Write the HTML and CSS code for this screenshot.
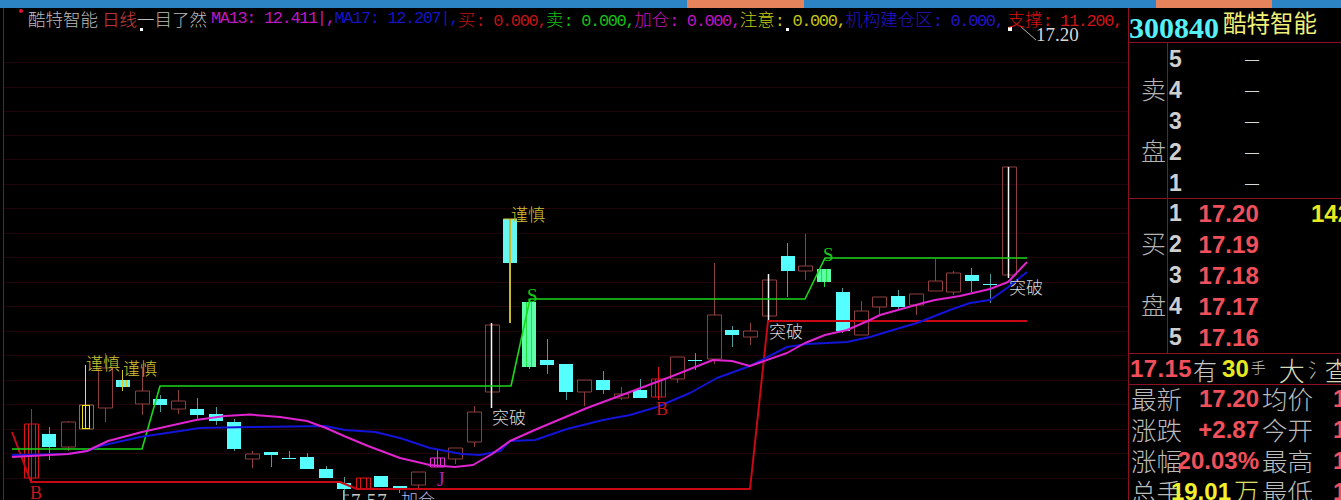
FILE: index.html
```html
<!DOCTYPE html>
<html lang="zh-CN">
<head>
<meta charset="utf-8">
<title>酷特智能 日线</title>
<link rel="stylesheet" href="styles.css">
</head>
<body>
<div class="app">
  <div class="topbar"><i class="seg"></i><i class="seg hot"></i><i class="seg"></i><i class="seg hot"></i><i class="seg"></i></div>
  <div class="main">
    <section class="chart">
      <svg class="plot" viewBox="0 8 1128 492" width="1128" height="492" xmlns="http://www.w3.org/2000/svg">
        <path class="grid" d="M4 62.5H1128M4 87.5H1128M4 111.5H1128M4 135.5H1128M4 159.5H1128M4 184.5H1128M4 208.5H1128M4 233.5H1128M4 257.5H1128M4 282.5H1128M4 306.5H1128M4 331.5H1128M4 355.5H1128M4 380.5H1128M4 404.5H1128M4 429.5H1128M4 453.5H1128M4 478.5H1128"/>
        <path class="axis" d="M3.5 8V500"/>
        <circle class="redDot" cx="21" cy="11" r="2"/>
        <g class="dots"><rect x="140" y="28" width="3" height="3"/><rect x="786" y="28" width="3" height="3"/><rect x="1008" y="27" width="4" height="4"/></g>
        <path class="leader" d="M1020 26L1036 40"/>

        <g class="hollow">
          <path d="M68.5 421V422M68.5 447V451M61.5 422h14v25h-14z"/>
          <path d="M105.5 353V368M105.5 408V422M98.5 368h14v40h-14z"/>
          <path d="M142.5 367V391M142.5 404V415M135.5 391h14v13h-14z"/>
          <path d="M178.5 390V401M178.5 409V414M171.5 401h14v8h-14z"/>
          <path d="M252.5 451V454M252.5 459V468M245.5 454h14v5h-14z"/>
          <path d="M418.5 485V488M411.5 472h14v13h-14z"/>
          <path d="M455.5 459V464M448.5 448h14v11h-14z"/>
          <path d="M474.5 406V412M474.5 442V447M467.5 412h14v30h-14z"/>
          <path d="M485.5 325h14v67h-14z"/>
          <path d="M584.5 392V406M577.5 380h14v12h-14z"/>
          <path d="M621.5 387V394M621.5 398V400M614.5 394h14v4h-14z"/>
          <path d="M677.5 379V383M670.5 357h14v22h-14z"/>
          <path d="M714.5 263V315M714.5 359V364M707.5 315h14v44h-14z"/>
          <path d="M750.5 323V331M750.5 337V345M743.5 331h14v6h-14z"/>
          <path d="M762.5 280h14v36h-14z"/>
          <path d="M805.5 234V266M805.5 271V280M798.5 266h14v5h-14z"/>
          <path d="M861.5 301V311M854.5 311h14v24h-14z"/>
          <path d="M879.5 307V315M872.5 297h14v10h-14z"/>
          <path d="M916.5 305V315M909.5 294h14v11h-14z"/>
          <path d="M935.5 259V281M928.5 281h14v10h-14z"/>
          <path d="M953.5 271V273M953.5 292V295M946.5 273h14v19h-14z"/>
          <path d="M1002.5 167h14v108h-14z"/>
        </g>

        <g class="wicks">
          <path d="M49.5 427V460M160.5 395V412M197.5 398V419M216.5 407V425M234.5 419V451M271.5 452V467M307.5 453V469M326.5 466V478M344.5 477V500M399.5 486V493M547.5 339V374M566.5 364V400M603.5 371V394M640.5 379V398M732.5 326V347M787.5 243V297M842.5 288V333M898.5 290V310M971.5 268V292M289.5 451V459M695.5 353V370M990.5 274V303"/>
        </g>
        <g class="cyan">
          <rect x="42" y="434" width="14" height="13"/><rect x="153" y="399" width="14" height="6"/><rect x="190" y="409" width="14" height="6"/><rect x="209" y="414" width="14" height="7"/><rect x="227" y="422" width="14" height="27"/><rect x="264" y="452" width="14" height="3"/><rect x="300" y="457" width="14" height="12"/><rect x="319" y="469" width="14" height="9"/><rect x="337" y="483" width="14" height="6"/><rect x="374" y="476" width="14" height="11"/><rect x="393" y="486" width="14" height="2"/><rect x="540" y="360" width="14" height="5"/><rect x="559" y="364" width="14" height="28"/><rect x="596" y="380" width="14" height="10"/><rect x="633" y="390" width="14" height="8"/><rect x="725" y="330" width="14" height="5"/><rect x="781" y="256" width="14" height="15"/><rect x="836" y="292" width="14" height="39"/><rect x="891" y="296" width="14" height="11"/><rect x="965" y="275" width="14" height="6"/>
          <rect x="282" y="458" width="14" height="1"/><rect x="688" y="360" width="14" height="1"/><rect x="983" y="284" width="14" height="1"/>
        </g>

        <g class="markRed">
          <path d="M31.5 409V481M24.5 424h14v54h-14zM28.5 424V478M35.5 424V478"/>
          <path d="M356.5 478h14v11h-14zM360.5 478V489M366.5 478V489"/>
          <path d="M658.5 367V400M651.5 379h14v18h-14zM655.5 379V397M661.5 379V397"/>
        </g>
        <g class="markYellow">
          <path class="dimBox" d="M79.5 405h14v24h-14z"/>
          <path d="M85.5 365V429M82.5 405V429M89.5 405V429M82 405.500H90M82 428.500H90"/>
        </g>
        <g class="striped">
          <rect class="skyFill" x="116" y="380" width="14" height="7"/>
          <path class="yellowLine" d="M122.500 370V391M119.500 380V387M126.500 380V387"/>
          <rect class="skyFill" x="503" y="219" width="14" height="44"/>
          <path class="yellowLine" d="M503.500 219H517"/>
          <path class="yellowWick" d="M510 219V323"/>
          <path class="mintLine" d="M507.500 219V263M513.500 219V263"/>
          <rect class="mintFill" x="522" y="302" width="14" height="65"/>
          <path class="greenLine" d="M526.500 302V367M531.500 302V367M529.500 367V369"/>
          <rect class="mintFill" x="817" y="269" width="14" height="13"/>
          <path class="greenLine" d="M821.500 269V282M826.500 269V282M824.500 282V287"/>
        </g>
        <g class="markMagenta">
          <path d="M437.500 449V467M430.500 458h14v9h-14zM434.500 458V467M440.500 458V467"/>
        </g>
        <g class="whiteWicks"><path d="M491.500 323V408M768.500 274V321M1008.500 167V278"/></g>

        <path class="line redLine" d="M12 432L31 482H340L357 489H750L768 321H1027"/>
        <path class="line greenTrend" d="M12 449H142L160 386H511L530 299H805L825 258H1027"/>
        <path class="line blueLine" d="M12 455L68 454 87 451 100 446 140 437 200 428 250 427 325 426 345 430 375 432 400 438 430 448 462 454 480 455 500 451 510 441 535 440 567 429 603 420 630 415 657 407 690 393 717 378 750 366 787 347 807 344 847 342 870 337 893 330 917 323 950 310 970 303 990 300 1007 288 1027 272"/>
        <path class="line magentaLine" d="M12 457L68 454 87 451 108 441 142 432 160 428 196 420 225 416 250 414.600 280 417 307 421 326 428 344 436 368 446 400 458 430 465 455 467 473 465 492 454 510 441 537 429 587 408 630 392 670 377 713 360 732 361 750 366 787 353 805 343 825 335 847 330 870 320 880 315 923 303 935 300 960 296 990 289 1008 282 1027 262"/>

        <g class="lblWarn"><text x="86" y="370">谨慎</text><text x="123" y="375">谨慎</text><text x="511" y="221">谨慎</text></g>
        <g class="lblBreak"><text x="492" y="424">突破</text><text x="769" y="338">突破</text><text x="1009" y="294">突破</text></g>
        <g class="lblS"><text x="527" y="302">S</text><text x="823" y="261">S</text></g>
        <g class="lblB"><text x="30" y="499">B</text><text x="656" y="415">B</text></g>
        <text class="lblJ" x="437" y="486">J</text>
        <path class="leader" d="M343.500 490V500M343.500 495H349"/>
        <text class="lblLow" x="351" y="507">7.57</text>
        <text class="lblAdd" x="401" y="506">加仓</text>
        <text class="lblHigh" x="1036" y="41">17.20</text>
      </svg>
      <div class="legend">
        <span class="cn name">酷特智能</span><span class="cn period">日线</span><span class="cn tool">一目了然</span>
        <span class="item c-ma13">MA13: 12.411|,</span><span class="item c-ma17">MA17: 12.207|,</span><span class="item c-red"><span class="cn">买</span>: 0.000,</span><span class="item c-green"><span class="cn">卖</span>: 0.000,</span><span class="item c-mag"><span class="cn">加仓</span>: 0.000,</span><span class="item c-yel"><span class="cn">注意</span>: 0.000,</span><span class="item c-blue"><span class="cn">机构建仓区</span>: 0.000,</span><span class="item c-red2"><span class="cn">支撑</span>: 11.200,</span><span class="item c-red2"><span class="cn">压</span></span>
      </div>
    </section>

    <aside class="panel">
      <header class="head"><span class="code">300840</span><span class="stock">酷特智能</span></header>
      <div class="book sell">
        <div class="side"><span class="s2">卖</span><span class="s4">盘</span></div>
        <div class="rows">
          <div class="row"><span class="n">5</span><span class="p dash">—</span></div>
          <div class="row"><span class="n">4</span><span class="p dash">—</span></div>
          <div class="row"><span class="n">3</span><span class="p dash">—</span></div>
          <div class="row"><span class="n">2</span><span class="p dash">—</span></div>
          <div class="row"><span class="n">1</span><span class="p dash">—</span></div>
        </div>
      </div>
      <div class="book buy">
        <div class="side"><span class="s2">买</span><span class="s4">盘</span></div>
        <div class="rows">
          <div class="row"><span class="n">1</span><span class="p">17.20</span><span class="v">142</span></div>
          <div class="row"><span class="n">2</span><span class="p">17.19</span></div>
          <div class="row"><span class="n">3</span><span class="p">17.18</span></div>
          <div class="row"><span class="n">4</span><span class="p">17.17</span></div>
          <div class="row"><span class="n">5</span><span class="p">17.16</span></div>
        </div>
      </div>
      <div class="quote">
        <span class="qp">17.15</span><span class="qt">有</span><span class="qv">30</span><span class="qu">手</span><span class="qb">大</span><span class="qc">氵</span><span class="qd">查</span>
      </div>
      <div class="stats">
        <div class="st"><span class="l">最新</span><span class="val"><b>17.20</b></span><span class="l2">均价</span><b class="r">1</b></div>
        <div class="st"><span class="l">涨跌</span><span class="val"><b>+2.87</b></span><span class="l2">今开</span><b class="r">1</b></div>
        <div class="st"><span class="l">涨幅</span><span class="val"><b>20.03%</b></span><span class="l2">最高</span><b class="r">1</b></div>
        <div class="st"><span class="l">总手</span><span class="val"><b class="y">19.01</b><span class="wan">万</span></span><span class="l2">最低</span><b class="r">1</b></div>
      </div>
    </aside>
  </div>
</div>
</body>
</html>
```

FILE: styles.css
```css
* { box-sizing: border-box; }
html, body { margin: 0; padding: 0; background: #000; }
body { width: 1341px; height: 500px; overflow: hidden; font-family: "Noto Sans CJK SC", sans-serif; }
.app { width: 1341px; height: 500px; display: flex; flex-direction: column; overflow: hidden; }

.topbar { height: 8px; flex: none; display: grid; grid-template-columns: 687px 117px 352px 116px 1fr; }
.seg { background: #2c84c4; }
.seg.hot { background: #e4835c; }

.main { flex: 1; display: flex; min-height: 0; }
.chart { position: relative; width: 1128px; flex: none; overflow: hidden; }
.plot { display: block; }

.grid { stroke: #1f040a; stroke-width: 1; fill: none; }
.axis { stroke: #8c1020; stroke-width: 1; }
.redDot { fill: #e01030; }
.dots rect { fill: #fff; }
.leader { stroke: #b0b0b0; stroke-width: 1; fill: none; }

.hollow path { fill: none; stroke: #8e3f3f; stroke-width: 1; }
.wicks path { fill: none; stroke: #4f9a9a; stroke-width: 1; }
.cyan rect { fill: #55ffff; }
.markRed path { fill: none; stroke: #e01414; stroke-width: 1; }
.markYellow path { fill: none; stroke: #f0e020; stroke-width: 1; }
.markYellow .dimBox { stroke: #92703a; }
.skyFill { fill: #66f8f0; }
.mintFill { fill: #5cffa8; }
.yellowLine { fill: none; stroke: #d8c828; stroke-width: 1; }
.yellowWick { fill: none; stroke: #c8b830; stroke-width: 2; }
.mintLine { fill: none; stroke: #a8f060; stroke-width: 1; }
.greenLine { fill: none; stroke: #20e040; stroke-width: 1; }
.markMagenta path { fill: none; stroke: #f030e0; stroke-width: 1; }
.whiteWicks path { fill: none; stroke: #f4f4f4; stroke-width: 1.5; }

.line { fill: none; stroke-linejoin: round; }
.redLine { stroke: #c80814; stroke-width: 2; }
.greenTrend { stroke: #18d818; stroke-width: 1.6; }
.blueLine { stroke: #1414d8; stroke-width: 2; }
.magentaLine { stroke: #e024d0; stroke-width: 2; }

.plot text { font-family: "Noto Sans CJK SC", sans-serif; font-size: 17px; font-weight: 300; }
.lblWarn text { fill: #d0c030; }
.lblBreak text { fill: #d8d8d8; }
.plot .lblS text { font-family: "Liberation Serif", serif; fill: #18c818; font-size: 19px; }
.plot .lblB text { font-family: "Liberation Serif", serif; fill: #c81818; font-size: 18px; }
.plot .lblJ { font-family: "Liberation Serif", serif; fill: #b020b0; font-size: 20px; }
.plot .lblLow { font-family: "Liberation Serif", serif; fill: #c8c8c8; font-size: 19px; letter-spacing: 0.800px; }
.plot .lblAdd { fill: #b8b8e8; }
.plot .lblHigh { font-family: "Liberation Serif", serif; fill: #d8d8d8; font-size: 19px; }

.legend { position: absolute; left: 0; top: 0; width: 1127px; height: 20px; padding-left: 28px; overflow: hidden; white-space: nowrap; font-size: 0; display: flex; align-items: center; }
.cn { font-family: "Noto Sans CJK SC", sans-serif; font-size: 17.500px; letter-spacing: 0; font-weight: 300; }
.name, .tool { color: #bcbcbc; }
.name { margin-right: 4px; }
.period { color: #d84040; }
.tool { margin-right: 4px; }
.item { font-family: "Liberation Mono", monospace; font-size: 17px; letter-spacing: -1.380px; flex: none; }
.c-ma13 { color: #c018c0; }
.c-ma17 { color: #1414c4; }
.c-red { color: #c01414; }
.c-green { color: #14c014; }
.c-mag { color: #c014c0; }
.c-yel { color: #c4c414; }
.c-blue { color: #2414c8; }
.c-red2 { color: #d01414; margin-left: 4px; }

.panel { flex: 1; min-width: 0; border-left: 1px solid #8c1020; display: flex; flex-direction: column; overflow: hidden; }
.head { height: 35px; flex: none; border-bottom: 1px solid #8c1020; display: flex; align-items: center; white-space: nowrap; }
.code { font-family: "Liberation Serif", serif; font-weight: 700; font-size: 30px; color: #55f0f8; margin-top: 5px; }
.stock { font-size: 23.500px; color: #f0f078; margin-left: 4px; font-weight: 400; margin-top: -5px; line-height: 1; }

.book { display: flex; flex: none; border-bottom: 1px solid #8c1020; }
.sell { height: 156px; padding-top: 2px; }
.buy { height: 155px; }
.side { width: 39px; flex: none; border-right: 1px solid #8c1020; display: grid; grid-template-rows: repeat(5, 31px); justify-items: end; padding-right: 1px; }
.sell .side { margin-top: -2px; padding-top: 2px; }
.side span { font-size: 25px; line-height: 31px; color: #b4b4b4; font-weight: 300; margin-top: -3px; }
.side .s2 { grid-row: 2; }
.side .s4 { grid-row: 4; }
.rows { flex: 1; display: grid; grid-template-rows: repeat(5, 31px); }
.row { display: flex; align-items: center; white-space: nowrap; padding-bottom: 2px; font-family: "Liberation Sans", sans-serif; font-weight: 700; font-size: 24px; line-height: 29px; }
.n { width: 14px; padding-left: 1px; color: #cfcfcf; flex: none; font-size: 23px; }
.p { width: 77px; text-align: right; color: #f0505c; flex: none; letter-spacing: 0.100px; }
.dash { color: #d8d8d8; font-weight: 400; font-size: 14px; }
.v { margin-left: 52px; color: #e8e820; }

.quote { height: 31px; flex: none; border-bottom: 1px solid #8c1020; display: flex; align-items: center; white-space: nowrap; padding-left: 1px; }
.quote span { flex: none; }
.qp { font-family: "Liberation Sans", sans-serif; font-weight: 700; font-size: 24px; color: #f0505c; letter-spacing: 0.400px; }
.qt { font-size: 24px; color: #c8c8c8; font-weight: 300; margin-left: 1px; line-height: 29px; }
.qv { font-family: "Liberation Sans", sans-serif; font-weight: 700; font-size: 24px; color: #e8e820; margin-left: 5px; }
.qu { font-size: 15px; color: #c8c8c8; font-weight: 300; margin-left: 2px; align-self: flex-start; margin-top: 2px; }
.qb { font-size: 26px; color: #d8d8b8; font-weight: 300; margin-left: 13px; line-height: 29px; }
.qc { font-size: 20px; color: #c0c0a0; font-weight: 300; margin-left: 3px; width: 10px; overflow: hidden; }
.qd { font-size: 26px; color: #d8d8b8; font-weight: 300; margin-left: 7px; }

.stats { flex: none; display: grid; grid-template-rows: repeat(4, 31px); margin-top: -2px; }
.st { display: flex; align-items: center; white-space: nowrap; padding-left: 2px; height: 31px; }
.l, .l2 { font-size: 25.500px; color: #bcbcbc; font-weight: 300; width: 52px; flex: none; line-height: 29px; margin-top: -2px; }
.val { width: 76px; flex: none; display: flex; justify-content: flex-end; align-items: center; }
.val b, .r { font-family: "Liberation Sans", sans-serif; font-weight: 700; font-size: 24px; color: #f0505c; }
.val b.y { color: #f0f030; }
.wan { font-size: 25px; color: #e0e060; font-weight: 300; margin-left: 3px; line-height: 29px; margin-top: -2px; }
.l2 { margin-left: 3px; }
.r { margin-left: 19px; }
```
